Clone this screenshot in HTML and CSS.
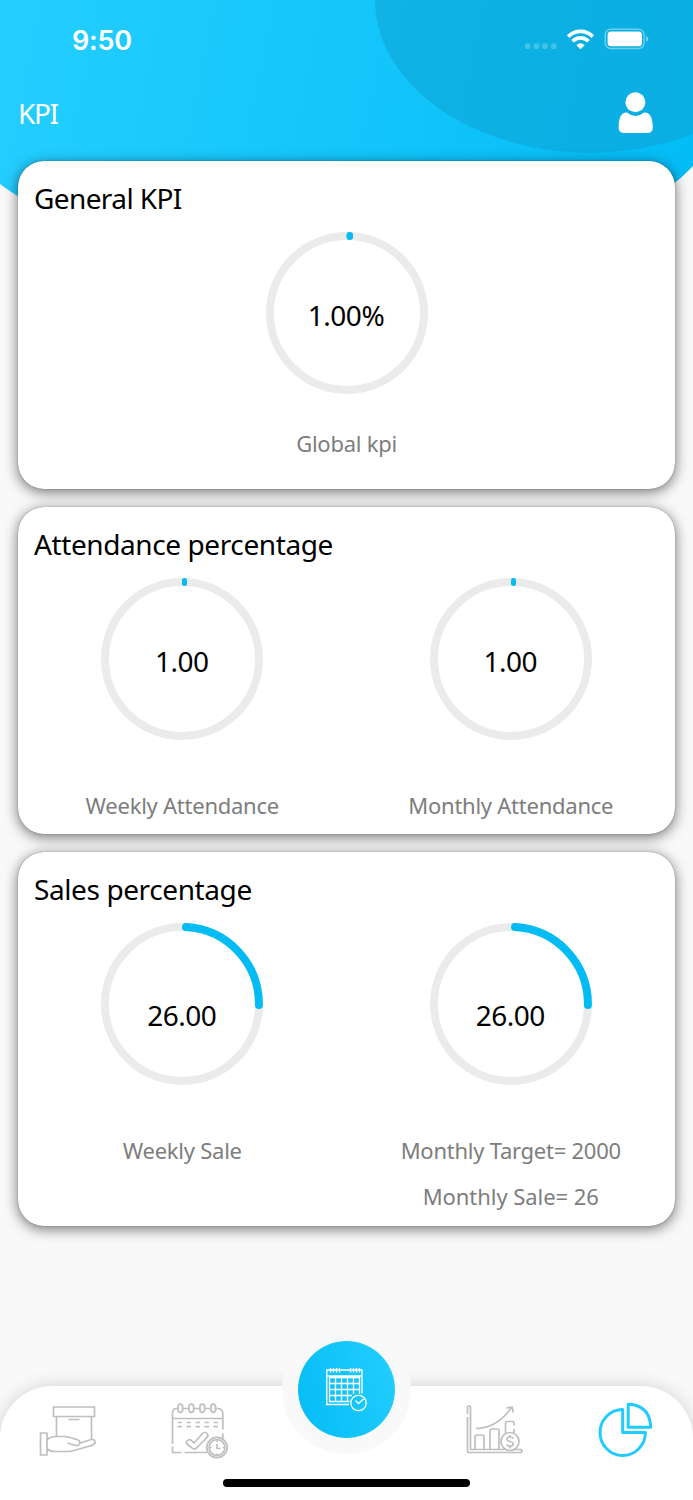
FILE: index.html
```html
<!DOCTYPE html>
<html lang="en">
<head>
<meta charset="utf-8">
<title>KPI</title>
<link rel="stylesheet" href="styles.css">
</head>
<body>
<div class="screen">
  <svg class="backdrop" viewBox="0 0 693 240" aria-hidden="true">
    <defs>
      <linearGradient id="sky" gradientUnits="userSpaceOnUse" x1="0" y1="60" x2="680" y2="200">
        <stop offset="0" stop-color="#24ceff"/><stop offset="1" stop-color="#04bdf6"/>
      </linearGradient>
    </defs>
    <path fill="url(#sky)" d="M0 0H693V166Q676 184 655 197Q350 240 20 197.500Q9 191 0 184Z"/>
    <path fill="#0f9bc9" fill-opacity=".45" d="M375 0A215 153 0 0 0 693 134V0Z"/>
  </svg>
  <header class="status">
    <span class="time">9:50</span>
    <svg class="signals" width="126" height="24" viewBox="0 0 126 24">
      <g fill="#fff" fill-opacity=".22"><rect x="0" y="15.500" width="5.500" height="5.500" rx="1.400"/><rect x="8.700" y="15.500" width="5.500" height="5.500" rx="1.400"/><rect x="17.300" y="15.500" width="5.500" height="5.500" rx="1.400"/><rect x="26" y="15.500" width="5.500" height="5.500" rx="1.400"/></g>
      <g fill="none" stroke="#fff" stroke-width="3.700"><path d="M43.200 8.600A17.300 17.300 0 0 1 67.800 8.600M47.600 13.200A11 11 0 0 1 63.400 13.200"/></g>
      <path fill="#fff" d="M51.400 17.200Q55.500 13.500 59.600 17.200L55.500 21.300Z"/>
      <rect x="80.200" y="1.200" width="38.800" height="19.300" rx="5.500" fill="none" stroke="#fff" stroke-opacity=".4" stroke-width="1.500"/>
      <rect x="82.600" y="3.600" width="34.400" height="14.600" rx="3.500" fill="#fff"/>
      <path fill="#fff" fill-opacity=".45" d="M121 8Q123.400 8.800 123.400 11Q123.400 13.200 121 14Z"/>
    </svg>
  </header>
  <div class="titlebar">
    <h1 class="title">KPI</h1>
    <svg class="person" width="36" height="42" viewBox="0 0 36 42"><ellipse cx="17.400" cy="10.200" rx="10" ry="10"/><path d="M9 20.500Q17.500 27.500 26 20.500Q31 20 33.300 25.500Q35 30 34.800 36Q34.500 41 29 41H6.500Q.8 41 .6 36Q.4 30 2 25.500Q4.300 20 9 20.500Z"/></svg>
  </div>
  <main class="cards">
    <section class="card card-general">
      <h2 class="heading heading-short">General KPI</h2>
      <div class="columns">
        <div class="metric">
          <div class="gauge">
            <svg class="ring" viewBox="0 0 162 162"><circle cx="81" cy="81" r="77"/><rect x="80.500" y="0" width="6.500" height="8" rx="3"/></svg>
            <span class="value">1.00%</span>
          </div>
          <p class="label label-near">Global kpi</p>
        </div>
      </div>
    </section>
    <section class="card card-attendance">
      <h2 class="heading">Attendance percentage</h2>
      <div class="columns">
        <div class="metric">
          <div class="gauge">
            <svg class="ring" viewBox="0 0 162 162"><circle cx="81" cy="81" r="77"/><rect x="81" y="0" width="5" height="8" rx="2.300"/></svg>
            <span class="value">1.00</span>
          </div>
          <p class="label">Weekly Attendance</p>
        </div>
        <div class="metric">
          <div class="gauge">
            <svg class="ring" viewBox="0 0 162 162"><circle cx="81" cy="81" r="77"/><rect x="81" y="0" width="5" height="8" rx="2.300"/></svg>
            <span class="value">1.00</span>
          </div>
          <p class="label">Monthly Attendance</p>
        </div>
      </div>
    </section>
    <section class="card card-sales">
      <h2 class="heading">Sales percentage</h2>
      <div class="columns">
        <div class="metric">
          <div class="gauge">
            <svg class="ring" viewBox="0 0 162 162"><circle cx="81" cy="81" r="77"/><path d="M85 4.100A77 77 0 0 1 157.900 82"/></svg>
            <span class="value value-low">26.00</span>
          </div>
          <p class="label">Weekly Sale</p>
        </div>
        <div class="metric">
          <div class="gauge">
            <svg class="ring" viewBox="0 0 162 162"><circle cx="81" cy="81" r="77"/><path d="M85 4.100A77 77 0 0 1 157.900 82"/></svg>
            <span class="value value-low">26.00</span>
          </div>
          <p class="label">Monthly Target= 2000</p>
          <p class="label label-next">Monthly Sale= 26</p>
        </div>
      </div>
    </section>
  </main>
  <nav class="tabs">
    <svg class="tab" width="60" height="56" viewBox="0 0 60 56"><path d="M14.500 4h41v9.500h-41zM17.500 13.500v20M52.500 13.500v22.500M29.500 16.500h11M1.500 30h6.500v22H1.500zM8 36.500Q12 33.500 16 33.500H25Q28 33.500 31 34.500L38.500 36.800Q42.500 38.500 40 42Q39 43 36 42.200L28.500 40M40.500 40.200L52 36.500Q56.500 36 56 40Q55 42 50 43.300L33 48Q31 48.500 28 48.500H16Q11 48.500 8 46"/></svg>
    <svg class="tab" width="60" height="56" viewBox="0 0 60 56"><path d="M2.500 41V10Q2.500 5.500 7 5.500H8M12.600 5.500H19M23.600 5.500H30M34.600 5.500H41M45.600 5.500h2.500Q52.800 6 52.800 11V26.500M2.500 15.500h50M52.800 30.500v6M2.500 43.500v6h9M14.500 49.500H37"/><path d="M8 3.500a2.300 2.300 0 0 1 4.600 0v3.500a2.300 2.300 0 0 1-4.600 0zM19 3.500a2.300 2.300 0 0 1 4.600 0v3.500a2.300 2.300 0 0 1-4.600 0zM30 3.500a2.300 2.300 0 0 1 4.600 0v3.500a2.300 2.300 0 0 1-4.600 0zM41 3.500a2.300 2.300 0 0 1 4.600 0v3.500a2.300 2.300 0 0 1-4.600 0z"/><path stroke-dasharray="4.500 4.500" d="M7.500 19.500h41M7.500 23.700h41"/><path d="M17 38Q20 35 22.500 38.500L24 40L32.500 30.500Q35 28 37 30.500Q39 32.500 36.500 35L26 45.500Q24 47 22 45L17 41Q15.500 39.500 17 38Z"/><circle cx="47" cy="44.500" r="10.200" fill="#fff"/><circle cx="47" cy="44.500" r="7.900"/><path d="M47 41v4.500h3.500M47 37.500v1.500M47 50.500v1.500M40 44.500h1.500M52.500 44.500h1.500"/></svg>
    <div class="middle" aria-hidden="true"></div>
    <svg class="tab" width="60" height="56" viewBox="0 0 60 56"><path d="M2.500 11V4Q4 1.500 5.500 4V46.500H56Q58 48 56 49.500H4.500Q2.500 49.500 2.500 47.500V14M10 46.500V34Q10 32 12 32H17Q19 32 19 34V46.500M25 46.500V28Q25 26 27 26H32Q34 26 34 28V46.500M40.500 30V20Q40.500 18.500 42 18.500H47.500Q49 18.500 49 20V22.500M49 26V30M11 25.500Q32 25 46.500 4.500M41.500 5L47.200 4L48.300 9.500"/><circle cx="45" cy="38.500" r="9" fill="#fff"/><path d="M48.500 35.500Q47.500 34 45 34Q42 34 42 36.300Q42 38 45 38.500Q48.200 39 48.200 41Q48.200 43.200 45 43.200Q42.200 43.200 41.500 41.500M45 32v2M45 43.200v2.300"/></svg>
    <svg class="tab tab-active" width="60" height="56" viewBox="0 0 60 56"><path d="M26.700 6.500A22.700 23 0 1 0 49.400 29.500H26.700ZM32.200 1V24.300H54.700Q54 2.500 32.200 1Z"/></svg>
    <div class="notch">
      <div class="fab">
        <svg width="44" height="46" viewBox="0 0 44 46"><path d="M24 37.500H1.800V3H37V26.500M1.800 9H37M4.500 10.500H34.500V27M4.500 10.500V34.500H24.500M10.500 10.500V34.500M16.500 10.500V34.500M22.500 10.500V34.500M28.500 10.500V27M4.500 16.500H34.500M4.500 22.500H34.500M4.500 28.500H27"/><path d="M5.500 1v4.500M8.500 1v4.500M11.500 1v4.500M14.500 1v4.500M25.500 1v4.500M28.500 1v4.500M31.500 1v4.500M34.500 1v4.500"/><circle cx="33.500" cy="36" r="7.700"/><path d="M30.500 33.500L33.500 36.500L38.500 32"/></svg>
      </div>
    </div>
    <div class="home"></div>
  </nav>
</div>
</body>
</html>
```
FILE: styles.css
```css
* { box-sizing: border-box; }
body { margin: 0; }
.screen {
  position: relative;
  width: 693px; height: 1500px;
  display: flex; flex-direction: column;
  overflow: hidden;
  background: #f9f9f9;
  color: #000;
  font-family: "Noto Sans", sans-serif;
}
.backdrop { position: absolute; left: 0; top: 0; width: 693px; height: 240px; }
.status, .titlebar, .cards { position: relative; }
.status {
  height: 80px; padding: 28px 42px 0 72px;
  display: flex; justify-content: space-between; align-items: flex-start;
  color: #fff;
}
.time { font: 600 27px/26px Inter, sans-serif; letter-spacing: -.2px; }
.titlebar {
  height: 81px; padding: 12px 39px 0 18px;
  display: flex; justify-content: space-between; align-items: flex-start;
  color: #fff;
}
.title { margin: 1px 0 0; font-size: 28px; line-height: 40px; font-weight: 400; letter-spacing: -1.4px; }
.person { fill: #fff; }
.cards { padding: 0 18px; display: flex; flex-direction: column; gap: 18px; }
.card {
  height: 328px; padding: 17px 0 0;
  border-radius: 26px;
  background: #fff;
  box-shadow: 0 0 1px rgba(0,0,0,.6), 0 3px 14px rgba(0,0,0,.55);
}
.card-attendance { height: 327px; }
.card-sales { height: 374px; }
.heading { margin: 0 0 14px 16px; font-size: 28px; line-height: 40px; font-weight: 400; letter-spacing: -.4px; }
.heading-short { letter-spacing: -.6px; }
.columns { display: flex; }
.metric { flex: 1; display: flex; flex-direction: column; align-items: center; }
.gauge { width: 162px; height: 162px; display: grid; place-items: center; }
.ring { grid-area: 1 / 1; width: 162px; height: 162px; fill: none; stroke-width: 8; stroke-linecap: round; }
.ring circle { stroke: #ebebeb; }
.ring path { stroke: #03bcf4; }
.ring rect { fill: #03bcf4; }
.value { grid-area: 1 / 1; font-size: 28px; line-height: 40px; letter-spacing: -.5px; padding: 4px 1px 0 0; }
.value-low { padding-top: 22px; }
.label { margin: 49px 0 0; color: #7d7d7d; font-size: 22px; line-height: 32px; letter-spacing: -.25px; }
.label-near { margin-top: 33px; }
.label-next { margin-top: 14px; letter-spacing: -.05px; }
.tabs {
  position: absolute; left: 0; right: 0; bottom: 0; height: 114px;
  padding: 17px 37px 0 39px;
  display: flex; justify-content: space-between; align-items: flex-start;
  border-radius: 52px 52px 0 0;
  background: #fff;
  box-shadow: 0 0 18px rgba(0,0,0,.16);
}
.tab { fill: none; stroke: #bfbfbf; stroke-width: 1.7; stroke-linejoin: round; }
.tab-active { stroke: #22cbff; stroke-width: 3; }
.middle { width: 93px; }
.notch {
  position: absolute; left: 282px; top: -61px;
  width: 129px; height: 129px;
  display: grid; place-items: center;
  border-radius: 50%; background: #f9f9f9;
}
.fab {
  width: 97px; height: 97px;
  display: grid; place-items: center;
  border-radius: 50%;
  background: linear-gradient(70deg, #03bcf5, #25ceff);
}
.fab svg { fill: none; stroke: #fff; stroke-width: 1.3; }
.home { position: absolute; left: 223px; top: 93px; width: 247px; height: 8px; border-radius: 4px; background: #000; }
```
